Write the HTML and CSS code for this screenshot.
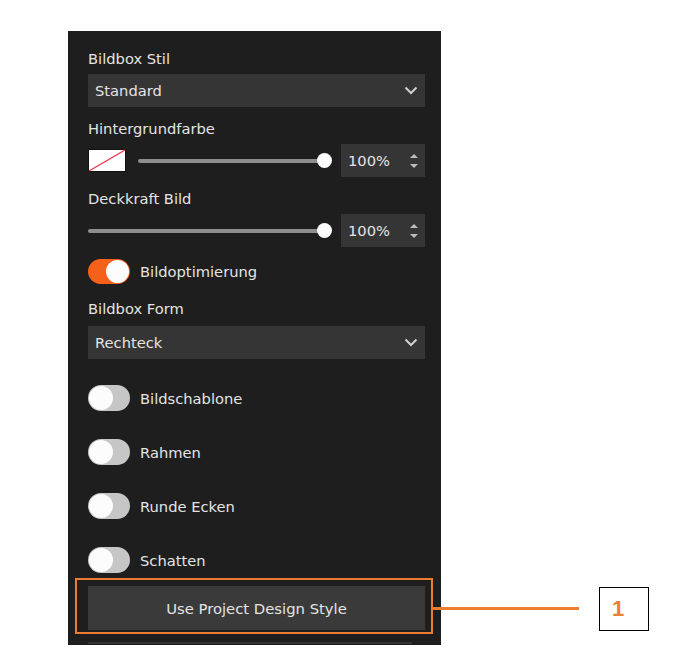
FILE: index.html
```html
<!DOCTYPE html>
<html lang="de">
<head>
    <meta charset="UTF-8">
    <meta name="viewport" content="width=device-width, initial-scale=1.0">
    <link rel="stylesheet" href="styles.css">
    <title>Bildbox Einstellungen</title>
</head>
<body>
    <div class="stage">
        <div class="panel">
            <div class="label first">Bildbox Stil</div>
            <div class="select">
                <span>Standard</span>
                <svg class="chevron" width="14" height="9" viewBox="0 0 14 9"><path d="M1.5 1.5 L7 7 L12.5 1.5" fill="none" stroke="#d0d0d0" stroke-width="2"/></svg>
            </div>

            <div class="label">Hintergrundfarbe</div>
            <div class="slider-row">
                <svg class="swatch" width="38" height="23" viewBox="0 0 38 23">
                    <rect x="0.5" y="0.5" width="37" height="22" fill="#fff" stroke="#111"/>
                    <line x1="1" y1="22" x2="37" y2="1" stroke="#f0304a" stroke-width="1.3"/>
                </svg>
                <div class="slider"><div class="track"></div><div class="thumb"></div></div>
                <div class="number">
                    <span>100%</span>
                    <svg class="spin" width="10" height="18" viewBox="0 0 10 18"><path d="M1 6 L5 2 L9 6 Z M1 12 L5 16 L9 12 Z" fill="#bdbdbd"/></svg>
                </div>
            </div>

            <div class="label">Deckkraft Bild</div>
            <div class="slider-row">
                <div class="slider wide"><div class="track"></div><div class="thumb"></div></div>
                <div class="number">
                    <span>100%</span>
                    <svg class="spin" width="10" height="18" viewBox="0 0 10 18"><path d="M1 6 L5 2 L9 6 Z M1 12 L5 16 L9 12 Z" fill="#bdbdbd"/></svg>
                </div>
            </div>

            <div class="toggle-row optim">
                <span class="toggle on"><span class="knob"></span></span>
                <span>Bildoptimierung</span>
            </div>

            <div class="label form-label">Bildbox Form</div>
            <div class="select">
                <span>Rechteck</span>
                <svg class="chevron" width="14" height="9" viewBox="0 0 14 9"><path d="M1.5 1.5 L7 7 L12.5 1.5" fill="none" stroke="#d0d0d0" stroke-width="2"/></svg>
            </div>

            <div class="toggles">
                <div class="toggle-row">
                    <span class="toggle"><span class="knob"></span></span>
                    <span>Bildschablone</span>
                </div>
                <div class="toggle-row">
                    <span class="toggle"><span class="knob"></span></span>
                    <span>Rahmen</span>
                </div>
                <div class="toggle-row">
                    <span class="toggle"><span class="knob"></span></span>
                    <span>Runde Ecken</span>
                </div>
                <div class="toggle-row">
                    <span class="toggle"><span class="knob"></span></span>
                    <span>Schatten</span>
                </div>
            </div>

            <div class="button-wrap">
                <button class="design-btn">Use Project Design Style</button>
                <!-- annotation -->
                <div class="callout"></div>
                <div class="connector"></div>
                <div class="marker">1</div>
            </div>
            <div class="divider"></div>
        </div>
    </div>
</body>
</html>
```

FILE: styles.css
```css
body {
    margin: 0;
    background: #fff;
    font-family: "DejaVu Sans", Verdana, sans-serif;
}

.stage {
    padding: 31px 0 0 68px;
}

.panel {
    width: 373px;
    height: 614px;
    box-sizing: border-box;
    background: #1e1e1e;
    padding: 18px 16px 0 20px;
    color: #e4e4e4;
    font-size: 14.7px;
}

.label {
    height: 20px;
    line-height: 20px;
    margin-top: 12px;
    margin-bottom: 5px;
}

.label.first {
    margin-top: 0;
}

.label.form-label {
    margin-top: 15px;
    margin-bottom: 7px;
}

.select {
    height: 33px;
    background: #353535;
    display: flex;
    align-items: center;
    justify-content: space-between;
    padding: 0 6px 0 7px;
}

.chevron {
    margin-right: 1px;
}

.slider-row {
    height: 33px;
    display: flex;
    align-items: center;
}

.swatch {
    margin-right: 12px;
}

.slider {
    position: relative;
    width: 194px;
    height: 16px;
    margin-right: 9px;
}

.slider.wide {
    width: 244px;
}

.track {
    position: absolute;
    left: 0;
    right: 7px;
    top: 6px;
    height: 4px;
    border-radius: 2px;
    background: #8e8e8e;
}

.thumb {
    position: absolute;
    right: 0;
    top: 0;
    width: 15px;
    height: 15px;
    border-radius: 50%;
    background: #fdfdfd;
}

.number {
    flex: 1;
    height: 33px;
    background: #353535;
    display: flex;
    align-items: center;
    justify-content: space-between;
    padding: 0 6px 0 7px;
}

.toggle-row {
    height: 26px;
    display: flex;
    align-items: center;
    gap: 10px;
}

.optim {
    margin-top: 11px;
}

.toggle {
    position: relative;
    width: 42px;
    height: 26px;
    border-radius: 13px;
    background: #c6c6c6;
    flex-shrink: 0;
}

.toggle.on {
    background: #f5601a;
    height: 25px;
}

.knob {
    position: absolute;
    left: 1px;
    top: 1px;
    width: 24px;
    height: 24px;
    border-radius: 50%;
    background: #fcfcfc;
}

.toggle.on .knob {
    left: auto;
    right: 1px;
    top: 1px;
    width: 23px;
    height: 23px;
}

.toggles {
    margin-top: 26px;
    display: flex;
    flex-direction: column;
    gap: 28px;
}

.button-wrap {
    position: relative;
    margin-top: 13px;
}

.design-btn {
    display: block;
    width: 100%;
    height: 44px;
    border: none;
    background: #3a3a3a;
    color: #e4e4e4;
    font-family: "DejaVu Sans", Verdana, sans-serif;
    font-size: 14.8px;
}

.callout {
    position: absolute;
    left: -13px;
    right: -8px;
    top: -8px;
    bottom: -4px;
    border: 2px solid #ed7d31;
}

.connector {
    position: absolute;
    left: 345px;
    top: 21px;
    width: 146px;
    height: 3px;
    background: #ed7d31;
}

.marker {
    position: absolute;
    left: 511px;
    top: 1px;
    width: 50px;
    height: 44px;
    box-sizing: border-box;
    border: 1.5px solid #000;
    background: #fff;
    color: #ed7d31;
    font-family: "Liberation Sans", Arial, sans-serif;
    font-weight: bold;
    font-size: 22px;
    display: flex;
    align-items: center;
    justify-content: center;
    padding-right: 12px;
}

.divider {
    margin-top: 12px;
    width: 324px;
    height: 2px;
    background: #333;
}
```
